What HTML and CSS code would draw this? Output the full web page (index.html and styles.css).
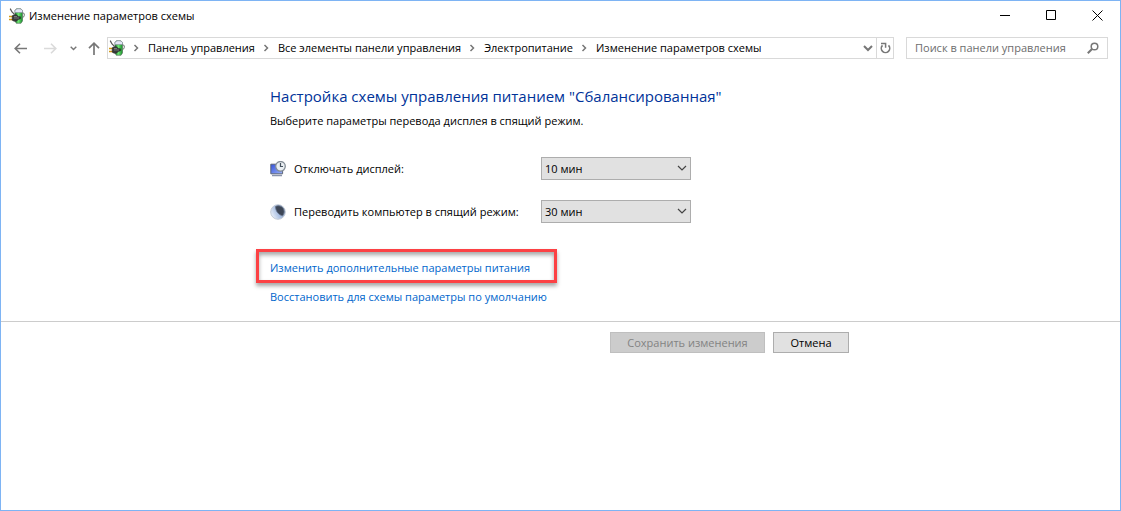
FILE: index.html
```html
<!DOCTYPE html>
<html lang="ru">
<head>
<meta charset="utf-8">
<title>Изменение параметров схемы</title>
<link rel="stylesheet" href="styles.css">
</head>
<body>
<svg class="sprite" aria-hidden="true">
  <defs>
    <linearGradient id="cell" x1="0" x2="1" y1="0" y2="0">
      <stop offset="0" stop-color="#1d7a2c"/><stop offset=".45" stop-color="#6fe673"/><stop offset="1" stop-color="#168a2a"/>
    </linearGradient>
    <linearGradient id="screen" x1="0" x2="1" y1="0" y2="1">
      <stop offset="0" stop-color="#3350d8"/><stop offset="1" stop-color="#9db4fb"/>
    </linearGradient>
    <linearGradient id="moon" x1="0" x2="1" y1=".8" y2=".3">
      <stop offset="0" stop-color="#f2f6fc"/><stop offset=".5" stop-color="#a9bfe2"/><stop offset="1" stop-color="#8b9bb5"/>
    </linearGradient>
  </defs>
  <symbol id="power" viewBox="0 0 16 16">
    <path d="M6 2.5 7.5.7h4L13.5 2.5V13l-1.5 2.3H7.3L6 13z" fill="url(#cell)" stroke="#4f6655" stroke-width=".6"/>
    <path d="M6 2.4C7 .2 12.5.2 13.5 2.4V4.5H6z" fill="#e3e5f5" stroke="#8a8da0" stroke-width=".6"/>
    <path d="M13.5 4.8c2.4-.4 2.5 4 0 5" fill="none" stroke="#65716a"/>
    <path d="M1.2.6 3 4l2.5 2.4" fill="none" stroke="#555" stroke-width="1.2"/>
    <path d="M0 8.5h4M0 11.5h4" stroke="#d49a16" stroke-width="1.6"/>
    <path d="M3.2 7.8 5 6.8h2.5l1.8 1.6 2.2.4v2l-2.3.6-1.7 1.8H5l-1.8-1z" fill="#393b3b" stroke="#202222" stroke-width=".5"/>
    <path d="M5 8.5h3M5 10h5" stroke="#858787" stroke-width=".8"/>
  </symbol>
  <symbol id="chevron-right" viewBox="0 0 6 8"><path d="m1.5 1 3 3-3 3" fill="none" stroke="#777" stroke-width="1.5"/></symbol>
  <symbol id="chevron-down" viewBox="0 0 10 7"><path d="m1 1 4 4 4-4" fill="none" stroke="currentColor" stroke-width="var(--stroke, 1.2)"/></symbol>
</svg>

<div class="window">
  <header class="titlebar">
    <svg class="app-icon"><use href="#power"/></svg>
    <h1 class="window-title">Изменение параметров схемы</h1>
    <div class="window-controls">
      <button class="window-button" aria-label="Свернуть"><svg width="11" height="11"><path d="M0 5.5h10" stroke="#000"/></svg></button>
      <button class="window-button" aria-label="Развернуть"><svg width="11" height="11"><path d="M.5.5h9v9h-9z" fill="none" stroke="#000"/></svg></button>
      <button class="window-button" aria-label="Закрыть"><svg width="11" height="11"><path d="m.5.5 10 10m0-10-10 10" stroke="#000" stroke-width="1"/></svg></button>
    </div>
  </header>

  <nav class="toolbar">
    <div class="history">
      <button class="nav-button" aria-label="Назад"><svg width="13" height="11"><path d="M1 5.5h12M6 .8 1.2 5.5 6 10.2" fill="none" stroke="#777" stroke-width="1.6"/></svg></button>
      <button class="nav-button" aria-label="Вперёд" disabled><svg width="13" height="11"><path d="M0 5.5h12M7 .8l4.8 4.7L7 10.2" fill="none" stroke="#dadada" stroke-width="1.6"/></svg></button>
      <button class="nav-button nav-recent" aria-label="Последние расположения"><svg class="chevron-recent"><use href="#chevron-down"/></svg></button>
      <button class="nav-button nav-up" aria-label="Вверх"><svg width="12" height="13"><path d="M6 13V1M1 6.2l5-5 5 5" fill="none" stroke="#777" stroke-width="1.7"/></svg></button>
    </div>
    <div class="address">
      <svg class="app-icon"><use href="#power"/></svg>
      <svg class="crumb-arrow"><use href="#chevron-right"/></svg>
      <a class="crumb" href="#">Панель управления</a>
      <svg class="crumb-arrow"><use href="#chevron-right"/></svg>
      <a class="crumb" href="#">Все элементы панели управления</a>
      <svg class="crumb-arrow"><use href="#chevron-right"/></svg>
      <a class="crumb" href="#">Электропитание</a>
      <svg class="crumb-arrow"><use href="#chevron-right"/></svg>
      <a class="crumb" href="#">Изменение параметров схемы</a>
      <button class="address-button address-history" aria-label="Предыдущие расположения"><svg class="chevron-address"><use href="#chevron-down"/></svg></button>
      <button class="address-button address-refresh" aria-label="Обновить"><svg width="11" height="12"><path d="M2.5 3.4a4.2 4.2 0 1 0 6 0" fill="none" stroke="#777" stroke-width="1.6"/><path d="M1 1.4h4.6v4.4" fill="none" stroke="#777" stroke-width="1.5"/></svg></button>
    </div>
    <label class="search">
      <input class="search-input" type="search" placeholder="Поиск в панели управления" aria-label="Поиск в панели управления">
      <svg width="12" height="12"><circle cx="7.5" cy="4.5" r="3.3" fill="none" stroke="#777" stroke-width="1.5"/><path d="M5 7 .8 11.2" stroke="#777" stroke-width="2"/></svg>
    </label>
  </nav>

  <main class="content">
    <h2 class="heading">Настройка схемы управления питанием "Сбалансированная"</h2>
    <p class="intro">Выберите параметры перевода дисплея в спящий режим.</p>
    <form class="settings">
      <div class="setting">
        <svg class="setting-icon" viewBox="0 0 16 16"><path d="M.8 3.2h11.8v9.6H.8z" fill="url(#screen)" stroke="#5d6577"/><path d="M2 14.5h10" stroke="#8993aa" stroke-width="1.5"/><circle cx="10.5" cy="5.3" r="4.8" fill="#e9eef2" stroke="#848d96" stroke-width="1.3"/><path d="M10.5 2v3.5H13" fill="none" stroke="#46525e" stroke-width="1.2"/></svg>
        <label for="display-off">Отключать дисплей:</label>
        <span class="select-box"><select class="select" id="display-off"><option>10 мин</option></select><svg class="select-arrow"><use href="#chevron-down"/></svg></span>
      </div>
      <div class="setting">
        <svg class="setting-icon" viewBox="0 0 16 16"><circle cx="8" cy="8" r="7.3" fill="url(#moon)" stroke="#c3cbd6"/><path d="M5.5 2.5C8 1 12.5 1.8 13.8 5.5c.8 2.5.2 4.8-1.3 6.3C9 11 5.5 7.5 5.5 2.5z" fill="#3d4656" stroke="#66748c" stroke-width=".8"/></svg>
        <label for="sleep">Переводить компьютер в спящий режим:</label>
        <span class="select-box"><select class="select" id="sleep"><option>30 мин</option></select><svg class="select-arrow"><use href="#chevron-down"/></svg></span>
      </div>
    </form>
    <div class="links">
      <a class="link highlighted" href="#">Изменить дополнительные параметры питания</a>
      <a class="link" href="#">Восстановить для схемы параметры по умолчанию</a>
    </div>
  </main>

  <footer class="footer">
    <div class="actions">
      <button class="button button-save" disabled>Сохранить изменения</button>
      <button class="button button-cancel">Отмена</button>
    </div>
  </footer>
</div>
</body>
</html>
```

FILE: styles.css
```css
* { box-sizing: border-box; }

body {
  margin: 0;
  background: #fff;
  color: #000;
  font: 11px/16px "Open Sans", "Noto Sans", sans-serif;
}

button, input, select { font: inherit; color: inherit; }
button { padding: 0; border: 0; background: none; }
a { text-decoration: none; }
h1, h2, p { margin: 0; font-weight: 400; }
svg { display: block; flex: none; }

.sprite { position: absolute; width: 0; height: 0; }

.window {
  min-height: 100vh;
  border: 1px solid #7eb4f4;
}

.titlebar {
  display: flex;
  align-items: center;
  height: 29px;
  padding-left: 8px;
}
.app-icon { width: 16px; height: 16px; }
.window-title { flex: 1; margin-left: 4px; font-size: 11px; }
.window-controls { display: flex; }
.window-button {
  display: grid;
  place-items: center;
  width: 46px;
  height: 28px;
}

.toolbar {
  display: flex;
  align-items: center;
  margin-top: 7px;
  padding-right: 12px;
}
.history { display: flex; width: 106px; padding-left: 4px; }
.nav-button {
  display: grid;
  place-items: center;
  width: 30px;
  height: 22px;
}
.nav-recent { width: 16px; }
.nav-up { width: 26px; }
.chevron-recent { width: 7px; height: 5px; color: #777; --stroke: 2; }
.address {
  display: flex;
  flex: 1;
  align-items: center;
  height: 22px;
  padding-left: 1px;
  border: 1px solid #d9d9d9;
}
.crumb-arrow { width: 6px; height: 8px; margin: 0 9px 0 8px; }
.crumb { color: #000; white-space: nowrap; }
.address-button { display: grid; place-items: center; height: 20px; }
.address-history { width: 16px; margin-left: auto; }
.address-refresh { width: 17px; border-left: 1px solid #d9d9d9; }
.chevron-address { width: 10px; height: 7px; color: #777; --stroke: 2; }
.search {
  display: flex;
  align-items: center;
  width: 202px;
  height: 22px;
  margin-left: 12px;
  padding: 0 8px;
  border: 1px solid #d9d9d9;
}
.search-input {
  flex: 1;
  min-width: 0;
  padding: 0;
  border: 0;
  outline: 0;
  background: none;
}
.search-input::placeholder { color: #6d6d6d; opacity: 1; }

.content { padding: 26px 16px 16px 269px; }
.heading { color: #003399; font-size: 15px; line-height: 22px; }
.intro { margin-top: 6px; }
.settings { display: grid; gap: 20px; margin-top: 28px; }
.setting {
  display: grid;
  grid-template-columns: 16px 239px 150px;
  column-gap: 8px;
  align-items: center;
}
.setting label { white-space: nowrap; }
.setting-icon { width: 16px; height: 16px; }
.select-box { display: grid; align-items: center; }
.select, .select-arrow { grid-area: 1 / 1; }
.select {
  appearance: none;
  width: 100%;
  height: 23px;
  padding: 0 20px 0 3px;
  border: 1px solid #adadad;
  border-radius: 0;
  background: #e1e1e1;
}
.select-arrow {
  justify-self: end;
  width: 10px;
  height: 7px;
  margin-right: 4px;
  color: #444;
  pointer-events: none;
}

.links {
  display: grid;
  justify-items: start;
  gap: 13px;
  margin-top: 37px;
}
.link { color: #0066cc; }
.highlighted { position: relative; }
.highlighted::after {
  content: "";
  position: absolute;
  inset: -11px -27px -7px -14px;
  border: 3px solid #fc4144;
  box-shadow: 0 3px 4px rgba(0, 0, 0, .35), inset 0 3px 4px rgba(0, 0, 0, .35);
  pointer-events: none;
}

.footer {
  padding: 10px 16px 10px 269px;
  border-top: 1px solid #ccc;
}
.actions {
  display: flex;
  justify-content: flex-end;
  gap: 8px;
  max-width: 579px;
}
.button {
  height: 21px;
  border: 1px solid #adadad;
  background: #e1e1e1;
}
.button-save { width: 155px; }
.button-save:disabled { border-color: #bfbfbf; background: #ccc; color: #838383; }
.button-cancel { width: 76px; }
```
